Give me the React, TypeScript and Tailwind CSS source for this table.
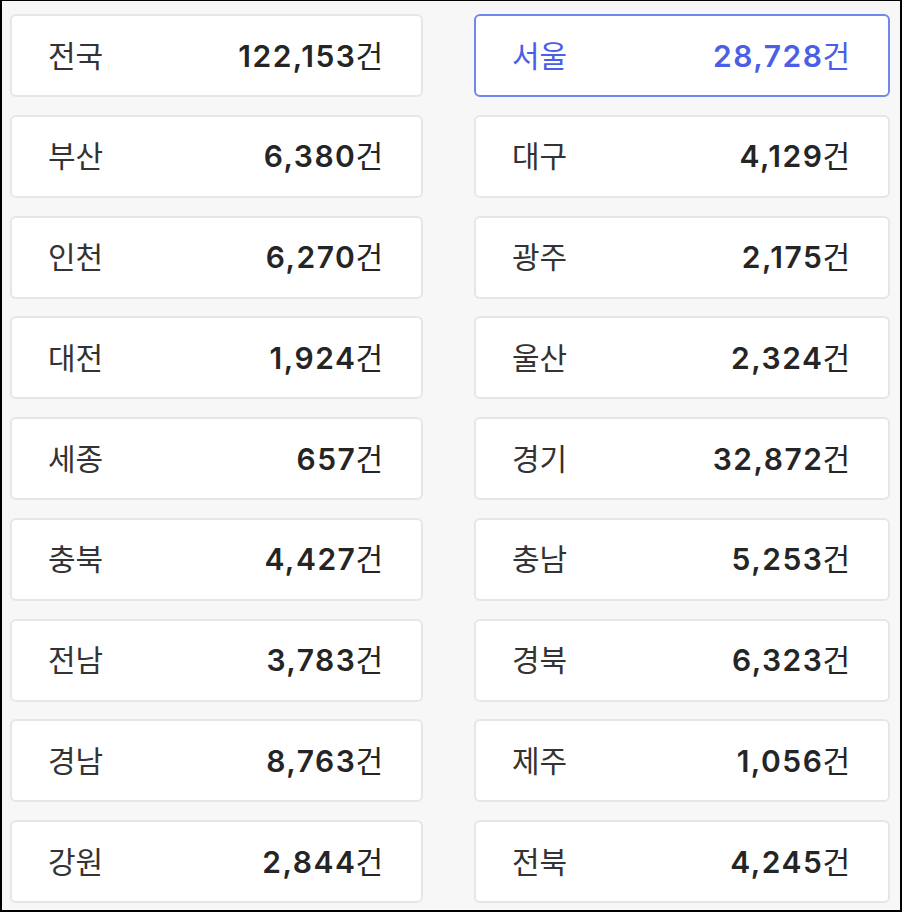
const regions: [string, string][] = [
  ["전국", "122,153"],
  ["서울", "28,728"],
  ["부산", "6,380"],
  ["대구", "4,129"],
  ["인천", "6,270"],
  ["광주", "2,175"],
  ["대전", "1,924"],
  ["울산", "2,324"],
  ["세종", "657"],
  ["경기", "32,872"],
  ["충북", "4,427"],
  ["충남", "5,253"],
  ["전남", "3,783"],
  ["경북", "6,323"],
  ["경남", "8,763"],
  ["제주", "1,056"],
  ["강원", "2,844"],
  ["전북", "4,245"],
];

function RegionCard({ name, count, active }: { name: string; count: string; active?: boolean }) {
  return (
    <div
      className={
        active
          ? "h-[83px] bg-white rounded-md border-2 border-[#7386ef] flex items-center justify-between pl-[36px] pr-[38px] text-[#4b5fe6]"
          : "h-[83px] bg-white rounded-md border-2 border-[#e6e6e6] flex items-center justify-between pl-[36px] pr-[38px] text-[#252525]"
      }
    >
      <span className={active ? "text-[30px] leading-none" : "text-[30px] leading-none text-[#333]"}>{name}</span>
      <span className="flex items-baseline leading-none">
        <span className="text-[30px] font-semibold tracking-[1.5px] mr-[-1px]">{count}</span>
        <span className="text-[30px] font-normal">건</span>
      </span>
    </div>
  );
}

export default function App() {
  return (
    <div
      className="w-[902px] h-[912px] bg-[#f7f7f7] border-2 border-t border-black overflow-hidden"
      style={{ fontFamily: 'Inter, "Noto Sans CJK KR", sans-serif' }}
    >
      <div className="grid grid-cols-[413px_416px] gap-x-[51px] gap-y-[17.75px] pl-2 pt-[13px]">
        {regions.map(([name, count], i) => (
          <RegionCard key={name} name={name} count={count} active={i === 1} />
        ))}
      </div>
    </div>
  );
}
